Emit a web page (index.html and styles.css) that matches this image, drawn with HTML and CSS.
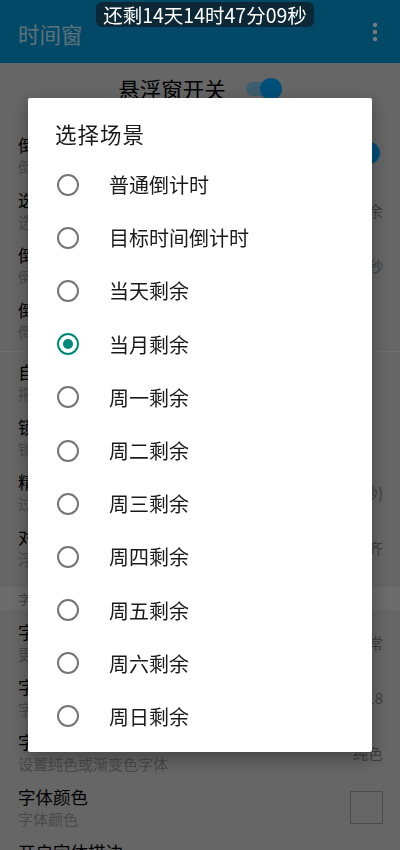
FILE: index.html
```html
<!DOCTYPE html>
<html lang="zh-CN">
<head>
    <meta charset="UTF-8">
    <meta name="viewport" content="width=device-width, initial-scale=1.0">
    <title>时间窗</title>
    <link rel="stylesheet" href="styles.css">
</head>
<body>
    <div class="page">
        <header class="app-bar">
            <span class="app-title">时间窗</span>
            <svg class="more-icon" width="6" height="20" viewBox="0 0 6 20">
                <circle cx="3" cy="3" r="2.2"/>
                <circle cx="3" cy="10" r="2.2"/>
                <circle cx="3" cy="17" r="2.2"/>
            </svg>
        </header>

        <div class="master-row">
            <span class="master-label">悬浮窗开关</span>
            <span class="switch"><span class="thumb"></span></span>
        </div>

        <div class="pref">
            <div class="pref-text">
                <div class="pref-title">倒计时显示</div>
                <div class="pref-summary">倒计时显示在悬浮窗中</div>
            </div>
            <span class="switch switch-end"><span class="thumb"></span></span>
        </div>
        <div class="pref">
            <div class="pref-text">
                <div class="pref-title">选择场景</div>
                <div class="pref-summary">选择倒计时场景</div>
            </div>
            <span class="pref-value">当月剩余</span>
        </div>
        <div class="pref">
            <div class="pref-text">
                <div class="pref-title">倒计时格式</div>
                <div class="pref-summary">倒计时显示格式</div>
            </div>
            <span class="pref-value">天时分秒</span>
        </div>
        <div class="pref">
            <div class="pref-text">
                <div class="pref-title">倒计时前缀</div>
                <div class="pref-summary">倒计时前缀文字</div>
            </div>
        </div>

        <div class="divider"></div>

        <div class="pref">
            <div class="pref-text">
                <div class="pref-title">自由移动</div>
                <div class="pref-summary">拖动悬浮窗改变位置</div>
            </div>
        </div>
        <div class="pref">
            <div class="pref-text">
                <div class="pref-title">锁定悬浮窗</div>
                <div class="pref-summary">锁定后悬浮窗不可拖动</div>
            </div>
        </div>
        <div class="pref">
            <div class="pref-text">
                <div class="pref-title">精确显示</div>
                <div class="pref-summary">过小时显示秒</div>
            </div>
            <span class="pref-value">(精确到秒)</span>
        </div>
        <div class="pref">
            <div class="pref-text">
                <div class="pref-title">对齐方式</div>
                <div class="pref-summary">浮窗文字对齐方式</div>
            </div>
            <span class="pref-value">居中对齐</span>
        </div>

        <div class="pref-category">字体设置</div>

        <div class="pref">
            <div class="pref-text">
                <div class="pref-title">字体样式</div>
                <div class="pref-summary">更改字体样式</div>
            </div>
            <span class="pref-value">正常</span>
        </div>
        <div class="pref">
            <div class="pref-text">
                <div class="pref-title">字体大小</div>
                <div class="pref-summary">字体大小</div>
            </div>
            <span class="pref-value">18</span>
        </div>
        <div class="pref">
            <div class="pref-text">
                <div class="pref-title">字体颜色类型</div>
                <div class="pref-summary">设置纯色或渐变色字体</div>
            </div>
            <span class="pref-value">纯色</span>
        </div>
        <div class="pref">
            <div class="pref-text">
                <div class="pref-title">字体颜色</div>
                <div class="pref-summary">字体颜色</div>
            </div>
            <span class="color-swatch"></span>
        </div>
        <div class="pref">
            <div class="pref-text">
                <div class="pref-title">开启字体描边</div>
                <div class="pref-summary">为字体添加描边</div>
            </div>
        </div>
    </div>

    <div class="scrim"></div>

    <div class="timer-pill">还剩14天14时47分09秒</div>

    <div class="dialog">
        <div class="dialog-title">选择场景</div>
        <div class="option"><span class="radio"></span><span class="option-label">普通倒计时</span></div>
        <div class="option"><span class="radio"></span><span class="option-label">目标时间倒计时</span></div>
        <div class="option"><span class="radio"></span><span class="option-label">当天剩余</span></div>
        <div class="option"><span class="radio checked"></span><span class="option-label">当月剩余</span></div>
        <div class="option"><span class="radio"></span><span class="option-label">周一剩余</span></div>
        <div class="option"><span class="radio"></span><span class="option-label">周二剩余</span></div>
        <div class="option"><span class="radio"></span><span class="option-label">周三剩余</span></div>
        <div class="option"><span class="radio"></span><span class="option-label">周四剩余</span></div>
        <div class="option"><span class="radio"></span><span class="option-label">周五剩余</span></div>
        <div class="option"><span class="radio"></span><span class="option-label">周六剩余</span></div>
        <div class="option"><span class="radio"></span><span class="option-label">周日剩余</span></div>
    </div>
</body>
</html>
```

FILE: styles.css
```css
body {
    margin: 0;
    width: 400px;
    height: 850px;
    overflow: hidden;
    font-family: "Noto Sans CJK SC", "Noto Sans", sans-serif;
    background-color: #cccccc;
}
.page {
    background-color: #cccccc;
}
.app-bar {
    height: 63px;
    background-color: #0292cf;
    display: flex;
    align-items: center;
    justify-content: space-between;
    padding: 0 22px 0 18px;
    box-sizing: border-box;
}
.app-title {
    font-size: 21.5px;
    color: rgba(255, 255, 255, 0.75);
    line-height: 28px;
    margin-top: 4px;
}
.more-icon {
    fill: #f0f0f0;
    margin-top: 1px;
}
.master-row {
    height: 65px;
    padding-bottom: 13px;
    box-sizing: border-box;
    display: flex;
    align-items: center;
    justify-content: center;
    gap: 20px;
}
.master-label {
    font-size: 21.5px;
    color: #000;
    line-height: 28px;
}
.switch {
    position: relative;
    display: inline-block;
    width: 36px;
    height: 22px;
}
.switch::before {
    content: "";
    position: absolute;
    left: 0;
    top: 4px;
    width: 34px;
    height: 14px;
    border-radius: 7px;
    background-color: #7bbcdc;
}
.switch .thumb {
    position: absolute;
    right: 0;
    top: 0;
    width: 22px;
    height: 22px;
    border-radius: 50%;
    background-color: #02a0f4;
}
.switch-end {
    margin-right: 3px;
    margin-top: -6px;
}
.pref {
    height: 55px;
    padding: 0 17px 0 18px;
    display: flex;
    align-items: center;
    justify-content: space-between;
}
.pref-title {
    font-size: 17.5px;
    line-height: 22px;
    color: #000;
}
.pref-summary {
    font-size: 15px;
    line-height: 22px;
    color: #949494;
}
.pref-value {
    font-size: 15px;
    color: #7e7e7e;
}
.divider {
    height: 1px;
    margin: 3px 0;
    background-color: #dedede;
}
.pref-category {
    margin: 11.5px 0 5.5px;
    height: 23px;
    line-height: 23px;
    padding-left: 18px;
    font-size: 13px;
    color: #8c8c8c;
    background-color: #d8d8d8;
}
.color-swatch {
    width: 33px;
    height: 33px;
    box-sizing: border-box;
    border: 1.5px solid #979797;
}
.scrim {
    position: fixed;
    inset: 0;
    background-color: rgba(0, 0, 0, 0.5);
}
.timer-pill {
    position: fixed;
    top: 2px;
    left: 96px;
    width: 218px;
    height: 25px;
    border-radius: 6px;
    background-color: #0c2736;
    color: #fff;
    font-size: 19.5px;
    line-height: 25px;
    text-align: center;
    white-space: nowrap;
}
.dialog {
    position: fixed;
    top: 98px;
    left: 28px;
    width: 344px;
    padding: 22px 0 9px;
    background-color: #fff;
    border-radius: 2px;
    box-shadow: 0 6px 18px rgba(0, 0, 0, 0.35);
}
.dialog-title {
    font-size: 21.5px;
    line-height: 28px;
    letter-spacing: 1px;
    color: #1a1a1a;
    padding-left: 27px;
    margin-bottom: 10px;
}
.option {
    height: 53.2px;
    display: flex;
    align-items: center;
    gap: 30px;
    padding-left: 29px;
}
.radio {
    width: 22px;
    height: 22px;
    box-sizing: border-box;
    border: 2px solid #757575;
    border-radius: 50%;
    display: flex;
    align-items: center;
    justify-content: center;
}
.radio.checked {
    border-color: #00897b;
}
.radio.checked::after {
    content: "";
    width: 10px;
    height: 10px;
    border-radius: 50%;
    background-color: #00897b;
}
.option-label {
    font-size: 20px;
    color: #1a1a1a;
}
```
